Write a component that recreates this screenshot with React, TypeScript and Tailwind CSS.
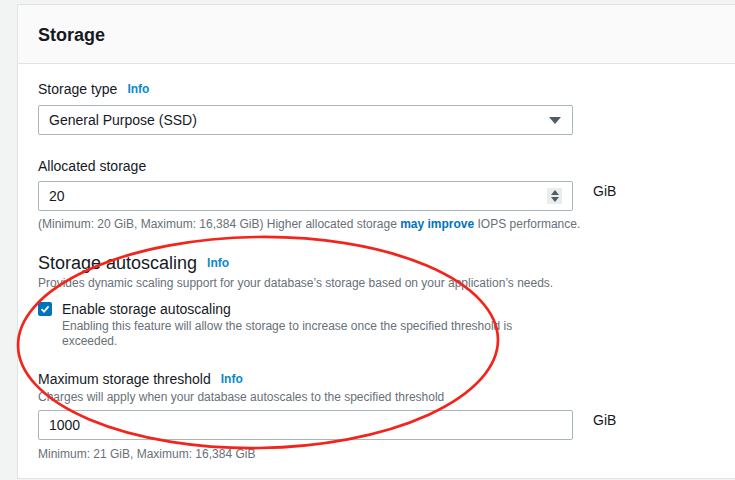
import React from 'react';

function Info() {
  return <span className="ml-[10px] text-[12px] font-bold text-[#0a89c8]">Info</span>;
}

function Spinner() {
  return (
    <div className="flex h-[16px] w-[15px] flex-col items-center justify-center gap-[2px] bg-[#eaeded]">
      <svg width="8" height="5" viewBox="0 0 8 5">
        <path d="M0 5 L4 0 L8 5 Z" fill="#545b64" />
      </svg>
      <svg width="8" height="5" viewBox="0 0 8 5">
        <path d="M0 0 L8 0 L4 5 Z" fill="#545b64" />
      </svg>
    </div>
  );
}

export default function App() {
  return (
    <div
      className="relative h-[480px] w-[735px] overflow-hidden bg-[#f2f3f3] pl-[17px] pt-[4px] text-[#16191f]"
      style={{ fontFamily: '"Liberation Sans", Arial, sans-serif' }}
    >
      <div className="h-[475px] w-[740px] border border-[#e1e4e4] bg-white">
        {/* Header */}
        <div className="flex h-[59px] items-center border-b border-[#e1e4e4] bg-[#fafafa] px-[20px] pt-[3px]">
          <h2 className="text-[18px] font-bold">Storage</h2>
        </div>

        <div className="px-[20px] pt-[15px]">
          {/* Storage type */}
          <div className="flex h-[20px] items-center text-[14px]">
            Storage type <Info />
          </div>
          <div className="mt-[6px] flex h-[30px] w-[535px] items-center justify-between rounded-[2px] border border-[#aab7b8] pl-[10px] pr-[11px] text-[14px]">
            <span>General Purpose (SSD)</span>
            <svg width="12" height="7" viewBox="0 0 12 7">
              <path d="M0 0 L12 0 L6 7 Z" fill="#545b64" />
            </svg>
          </div>

          {/* Allocated storage */}
          <div className="mt-[21px] flex h-[20px] items-center text-[14px]">Allocated storage</div>
          <div className="mt-[5px] flex items-start">
            <div className="flex h-[30px] w-[535px] items-center justify-between rounded-[2px] border border-[#aab7b8] pl-[10px] pr-[10px] text-[14px]">
              <span>20</span>
              <Spinner />
            </div>
            <span className="ml-[20px] text-[14px]">GiB</span>
          </div>
          <p className="mt-[5px] text-[12px] leading-[16px] text-[#687078]">
            (Minimum: 20 GiB, Maximum: 16,384 GiB) Higher allocated storage{' '}
            <span className="font-bold text-[#0073bb]">may improve</span> IOPS performance.
          </p>

          {/* Storage autoscaling */}
          <div className="mt-[19px] flex h-[24px] items-center">
            <span className="text-[18px]">Storage autoscaling</span>
            <Info />
          </div>
          <p className="text-[12px] leading-[16px] text-[#687078]">
            Provides dynamic scaling support for your database’s storage based on your application’s needs.
          </p>

          <div className="mt-[8px] flex items-start">
            <div className="mt-[3px] flex h-[14px] w-[14px] items-center justify-center rounded-[2px] bg-[#0073bb]">
              <svg width="10" height="10" viewBox="0 0 10 10">
                <path d="M1.5 5.2 L4 7.6 L8.6 2.4" fill="none" stroke="#fff" strokeWidth="1.8" />
              </svg>
            </div>
            <div className="ml-[10px]">
              <div className="h-[20px] text-[14px] leading-[20px]">Enable storage autoscaling</div>
              <p className="w-[470px] text-[12px] leading-[15px] text-[#687078]">
                Enabling this feature will allow the storage to increase once the specified threshold is exceeded.
              </p>
            </div>
          </div>

          {/* Maximum storage threshold */}
          <div className="mt-[20px] flex h-[20px] items-center text-[14px]">
            Maximum storage threshold <Info />
          </div>
          <p className="text-[12px] leading-[16px] text-[#687078]">
            Charges will apply when your database autoscales to the specified threshold
          </p>
          <div className="mt-[5px] flex items-start">
            <div className="flex h-[30px] w-[535px] items-center rounded-[2px] border border-[#aab7b8] pl-[10px] text-[14px]">
              1000
            </div>
            <span className="ml-[20px] text-[14px]">GiB</span>
          </div>
          <p className="mt-[6px] text-[12px] leading-[16px] text-[#687078]">
            Minimum: 21 GiB, Maximum: 16,384 GiB
          </p>
        </div>
      </div>

      {/* Red annotation */}
      <svg className="pointer-events-none absolute left-0 top-0" width="735" height="480" viewBox="0 0 735 480">
        <ellipse
          cx="258"
          cy="342.5"
          rx="240"
          ry="105.5"
          fill="none"
          stroke="#f2241b"
          strokeWidth="2.7"
          transform="rotate(-0.8 258 342.5)"
        />
      </svg>
    </div>
  );
}
